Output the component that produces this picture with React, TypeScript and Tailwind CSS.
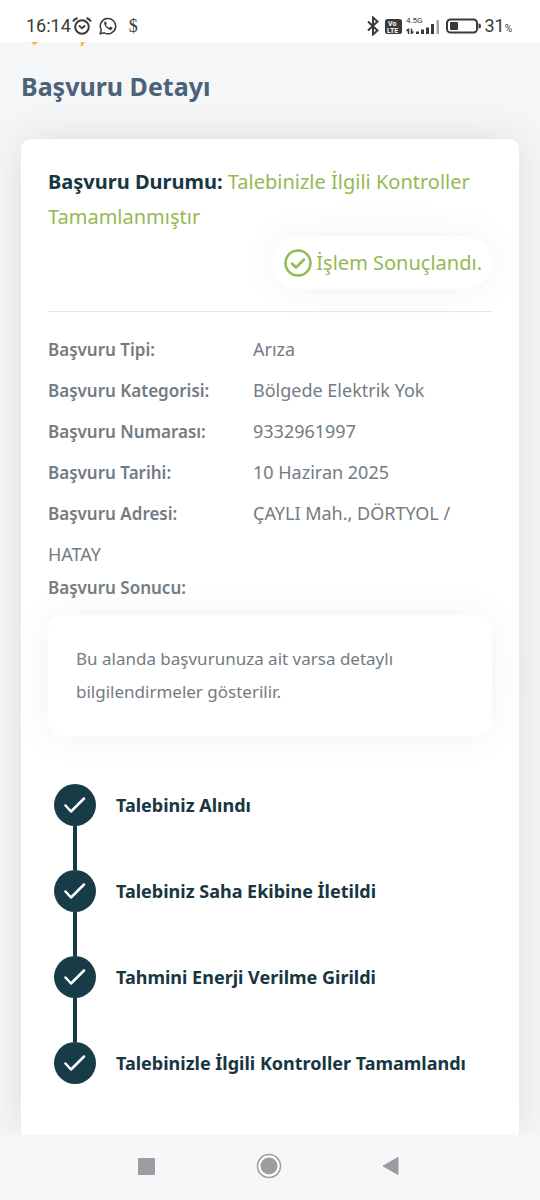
import type { ReactNode } from 'react';

const details = [
  { label: 'Başvuru Tipi:', value: 'Arıza' },
  { label: 'Başvuru Kategorisi:', value: 'Bölgede Elektrik Yok' },
  { label: 'Başvuru Numarası:', value: '9332961997' },
  { label: 'Başvuru Tarihi:', value: '10 Haziran 2025' },
  { label: 'Başvuru Adresi:', value: 'ÇAYLI Mah., DÖRTYOL / HATAY' },
];

const steps = [
  'Talebiniz Alındı',
  'Talebiniz Saha Ekibine İletildi',
  'Tahmini Enerji Verilme Girildi',
  'Talebinizle İlgili Kontroller Tamamlandı',
];

function StatusBar() {
  return (
    <header className="flex h-[42px] shrink-0 items-end justify-between bg-white pr-7 pb-1 pl-[26px] font-['Roboto',sans-serif] text-[#3a3a3a]">
      <div className="flex items-center">
        <span className="text-lg leading-6">16:14</span>
        {/* Alarm */}
        <svg className="ml-px h-5 w-5" viewBox="0 0 20 20" fill="none" stroke="currentColor">
          <circle cx="10" cy="11" r="6.8" strokeWidth="2" />
          <path d="M1 5.5 Q2.5 3 5.500 2M19 5.5 Q17.500 3 14.500 2" strokeWidth="2" />
          <path d="m7 9.5 3 2.8 3.2-2.8" strokeWidth="1.8" />
        </svg>
        {/* WhatsApp */}
        <svg className="ml-[7px] h-[18px] w-[18px]" viewBox="0 0 18 18" fill="none" stroke="currentColor">
          <path d="M1.2 16.8 2.3 12.9A7.7 7.7 0 1 1 5.2 15.8Z" strokeWidth="1.5" />
          <path
            d="M6.1 4.6c-1 .6-1.2 1.8-.7 3 1.1 2.6 2.7 4.2 5.2 5.2 1.3.5 2.4 0 2.8-1.2l.1-.8-2.3-1.2-1.1 1.200c-1.500-.6-2.500-1.600-3.100-3l.8-1-.9-2.200Z"
            fill="currentColor"
            stroke="none"
          />
        </svg>
        <span className="ml-3 font-['Liberation_Serif',serif] text-lg leading-6">$</span>
      </div>
      <div className="flex items-center">
        {/* Bluetooth */}
        <svg className="h-5 w-3" viewBox="0 0 12 20" fill="none" stroke="currentColor" strokeWidth="2">
          <path d="m1 5.5 9.500 9L6 18.500v-17l4.500 4L1 14.500" />
        </svg>
        {/* VoLTE */}
        <svg className="ml-[6px] h-[15px] w-[17px]" viewBox="0 0 17 15">
          <rect width="17" height="15" rx="2.5" fill="currentColor" />
          <text x="3" y="7" fontSize="7" fontWeight="700" fill="#fff">Vo</text>
          <text x="2" y="13.5" fontSize="7" fontWeight="700" fill="#fff">LTE</text>
        </svg>
        {/* Signal */}
        <svg className="ml-1 h-5 w-[35px]" viewBox="0 0 35 20" fill="currentColor">
          <text x="0" y="6.5" fontSize="8">4.5G</text>
          <path d="M2.500 12.500V18M0.500 15l2-2M5.500 12.500V18M7.500 15.500l-2 2" fill="none" stroke="currentColor" strokeWidth="1.5" />
          <path d="M10 15.500h3V18h-3zM15 13.500h3V18h-3zM20 11.500h3V18h-3zM25 8h3v10h-3z" />
          <path d="M30.500 4h2.500v14h-2.500z" opacity=".45" />
        </svg>
        {/* Battery */}
        <svg className="ml-[5px] h-4 w-9" viewBox="0 0 36 16">
          <rect x="1" y="1.5" width="30" height="13" rx="3.5" fill="none" stroke="currentColor" strokeWidth="2" />
          <rect x="4" y="4" width="8" height="8" rx="1" fill="currentColor" />
          <path d="M32.500 5.500a2.500 2.500 0 0 1 0 5Z" fill="currentColor" />
        </svg>
        <span className="ml-[2px] flex items-baseline text-lg leading-6">
          31<span className="text-[10px] leading-none">%</span>
        </span>
      </div>
    </header>
  );
}

function CheckMark({ className }: { className: string }) {
  return (
    <svg className={className} viewBox="0 0 22 18" fill="none" stroke="currentColor" strokeWidth="2.5" strokeLinecap="round" strokeLinejoin="round">
      <path d="m1.500 9.500 5.500 6L20 2.500" />
    </svg>
  );
}

function Label({ children }: { children: ReactNode }) {
  return <span className="inline-block w-[205px] text-[17px] font-semibold">{children}</span>;
}

function NavBar() {
  return (
    <nav className="grid h-[65px] shrink-0 grid-cols-[1fr_122px_122px_122px_1fr] items-center bg-[#f5f7f9] pr-[3px] pb-[3px] text-[#9c9da0]">
      <button type="button" aria-label="Son uygulamalar" className="col-start-2 flex justify-center">
        <svg className="h-[17px] w-[17px]" viewBox="0 0 17 17" fill="currentColor">
          <rect width="17" height="17" rx="1" />
        </svg>
      </button>
      <button type="button" aria-label="Ana ekran" className="flex justify-center">
        <svg className="h-[26px] w-[26px]" viewBox="0 0 26 26" fill="currentColor">
          <circle cx="13" cy="13" r="11.5" fill="#fff" stroke="currentColor" strokeWidth="1.5" />
          <circle cx="13" cy="13" r="8.5" />
        </svg>
      </button>
      <button type="button" aria-label="Geri" className="flex justify-center">
        <svg className="h-5 w-[17px]" viewBox="0 0 17 20" fill="currentColor">
          <path d="M16 1.5v17L1 10Z" stroke="currentColor" strokeLinejoin="round" />
        </svg>
      </button>
    </nav>
  );
}

export default function App() {
  return (
    <div className="flex min-h-screen flex-col bg-[#f4f6f8] font-['Noto_Sans',sans-serif] text-[#737b83]">
      <StatusBar />
      <main className="flex flex-1 flex-col overflow-hidden px-[21px]">
        {/* Back link, scrolled under the status bar */}
        <svg className="ml-2 h-[6px] w-14 shrink-0 text-[#f3bf3d]" viewBox="0 0 56 6" fill="currentColor">
          <path d="M2 0h7L7 2.5H4ZM51.500 0h3.500c.5 2.500-.8 4-3.500 4.500l-.5-1c1.300-.4 1.500-1.200 1-1.500Z" />
        </svg>
        <h1 className="mt-[18px] text-[25px] leading-10 font-bold text-[#4b6278]">Başvuru Detayı</h1>

        <section className="mt-[33px] flex-1 rounded-t-[10px] bg-white px-[27px] pt-[25px] pb-[51px] shadow-[0_0_40px_rgba(0,0,0,0.1)]">
          <h2 className="text-xl leading-[35px] text-[#93b954]">
            <span className="font-bold text-[#163642]">Başvuru Durumu:</span> Talebinizle İlgili Kontroller Tamamlanmıştır
          </h2>
          <div className="mt-[2px] flex justify-end">
            <div className="flex h-[53px] items-center gap-1 rounded-full bg-white pr-[10px] pl-3 text-xl text-[#93b954] shadow-[0_0_40px_rgba(0,0,0,0.06)]">
              <svg className="h-7 w-7" viewBox="0 0 28 28" fill="none" stroke="currentColor" strokeWidth="2.5" strokeLinecap="round" strokeLinejoin="round">
                <circle cx="14" cy="14" r="12.5" />
                <path d="m8 14.500 4 4 8-8" />
              </svg>
              <span>İşlem Sonuçlandı.</span>
            </div>
          </div>

          <hr className="mt-[22px] mb-[17px] border-[#e6e8ea]" />

          <div className="text-lg leading-[41px]">
            {details.map((item) => (
              <p key={item.label}>
                <Label>{item.label}</Label>
                {item.value}
              </p>
            ))}
          </div>
          <p className="text-lg leading-6">
            <Label>Başvuru Sonucu:</Label>
          </p>

          <p className="mt-[15px] rounded-2xl bg-white px-7 pt-[27px] pb-7 text-[17px] leading-[33px] shadow-[0_0_40px_rgba(0,0,0,0.06)]">
            Bu alanda başvurunuza ait varsa detaylı bilgilendirmeler gösterilir.
          </p>

          {/* Progress */}
          <ol className="mt-12 pl-[6px] text-[#163642]">
            {steps.map((step, index) => (
              <li key={step} className="flex gap-5">
                <div className="flex flex-col items-center">
                  <span className="flex h-[42px] w-[42px] items-center justify-center rounded-full bg-[#173b47] text-white">
                    <CheckMark className="h-[18px] w-[22px]" />
                  </span>
                  {index < steps.length - 1 && <span className="h-11 w-1 bg-[#173b47]" />}
                </div>
                <span className="text-lg leading-[42px] font-bold">{step}</span>
              </li>
            ))}
          </ol>
        </section>
      </main>
      <NavBar />
    </div>
  );
}
